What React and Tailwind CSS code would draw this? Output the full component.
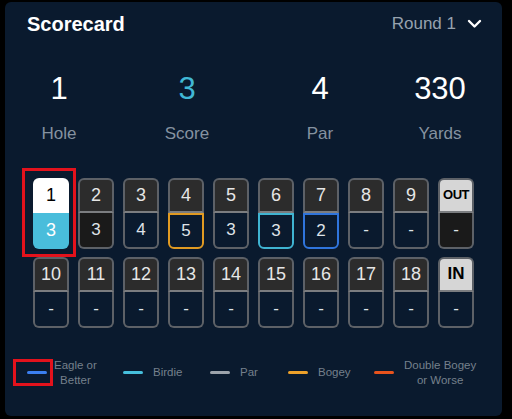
const HOLES_OUT = [
  { hole: "1", score: "3", kind: "selected" },
  { hole: "2", score: "3", kind: "par" },
  { hole: "3", score: "4", kind: "none" },
  { hole: "4", score: "5", kind: "bogey" },
  { hole: "5", score: "3", kind: "none" },
  { hole: "6", score: "3", kind: "birdie" },
  { hole: "7", score: "2", kind: "eagle" },
  { hole: "8", score: "-", kind: "none" },
  { hole: "9", score: "-", kind: "none" },
];

const HOLES_IN = ["10", "11", "12", "13", "14", "15", "16", "17", "18"].map((h) => ({
  hole: h,
  score: "-",
  kind: "none",
}));

const STATS = [
  { value: "1", label: "Hole", color: "text-white" },
  { value: "3", label: "Score", color: "text-[#41b8d5]" },
  { value: "4", label: "Par", color: "text-white" },
  { value: "330", label: "Yards", color: "text-white" },
];

const LEGEND = [
  { label: ["Eagle or", "Better"], color: "bg-[#3b7ff0]", boxed: true },
  { label: ["Birdie"], color: "bg-[#46bfdc]" },
  { label: ["Par"], color: "bg-[#9ca3ab]" },
  { label: ["Bogey"], color: "bg-[#eda12a]" },
  { label: ["Double Bogey", "or Worse"], color: "bg-[#e8531c]" },
];

function bottomClass(kind) {
  switch (kind) {
    case "bogey":
      return "border-2 border-[#e09a22] bg-[#0a1a2e]";
    case "birdie":
      return "border-2 border-[#3fb4d2] bg-[#0a1a2e]";
    case "eagle":
      return "border-2 border-[#2f74db] bg-[#0a1a2e]";
    case "par":
      return "border-2 border-t-0 border-[#5d6167] bg-[#1a1a1a]";
    default:
      return "border-2 border-t-0 border-[#5d6167] bg-[#0a1a2e]";
  }
}

function Tile({ hole, score, kind }) {
  if (kind === "selected") {
    return (
      <div className="relative w-[36px] h-[71px]">
        <div className="absolute -left-[11px] -top-[10px] w-[54px] h-[89px] border-[3px] border-[#e3121c]" />
        <div className="flex flex-col w-[36px] h-[71px] rounded-md overflow-hidden">
          <div className="h-[35px] bg-white flex items-center justify-center text-[18px] text-black">{hole}</div>
          <div className="h-[36px] bg-[#49bddb] flex items-center justify-center text-[18px] text-white">{score}</div>
        </div>
      </div>
    );
  }
  return (
    <div className="flex flex-col w-[36px] h-[71px]">
      <div className="h-[35px] rounded-t-md border-2 border-[#5d6167] border-b-[#7b7d80] bg-[#2c2c2c] flex items-center justify-center text-[18px] text-[#e6e6e6]">
        {hole}
      </div>
      <div className={`h-[36px] rounded-b-md flex items-center justify-center text-[17px] text-[#dfe3e8] ${bottomClass(kind)}`}>
        {score}
      </div>
    </div>
  );
}

function TotalTile({ label, dark, small }) {
  return (
    <div className="flex flex-col w-[36px] h-[71px]">
      <div
        className={`h-[35px] rounded-t-md border-2 border-[#5d6167] border-b-[#7b7d80] bg-[#d6d6d6] flex items-center justify-center font-bold text-black ${
          small ? "text-[13px] tracking-[-0.5px]" : "text-[17px]"
        }`}
      >
        {label}
      </div>
      <div
        className={`h-[36px] rounded-b-md border-2 border-t-0 border-[#5d6167] flex items-center justify-center text-[17px] text-[#dfe3e8] ${
          dark ? "bg-[#1a1a1a]" : "bg-[#0a1a2e]"
        }`}
      >
        -
      </div>
    </div>
  );
}

export default function App() {
  return (
    <div className="w-[512px] h-[419px] bg-black pl-[5px] pt-[2px] pr-[10px] pb-[3px] font-['Liberation_Sans',Arial,sans-serif]">
      <div className="w-full h-full bg-[#0a1a2e] rounded-md flex flex-col">
        <div className="flex items-center justify-between pl-[22px] pr-[20px] pt-[8px] h-[36px]">
          <span className="text-white font-bold text-[20px]">Scorecard</span>
          <div className="flex items-center gap-[11px]">
            <span className="text-[#97a2ae] text-[17px]">Round 1</span>
            <svg width="15" height="10" viewBox="0 0 15 10" fill="none">
              <path d="M2 2l5.5 5.5L13 2" stroke="white" strokeWidth="2.4" strokeLinecap="round" strokeLinejoin="round" />
            </svg>
          </div>
        </div>

        <div className="grid grid-cols-[108px_148px_118px_122px] mt-[35px]">
          {STATS.map((s) => (
            <div key={s.label} className="flex flex-col items-center">
              <span className={`text-[31px] leading-[32px] ${s.color}`}>{s.value}</span>
              <span className="text-[17px] text-[#8592a0] mt-[16px]">{s.label}</span>
            </div>
          ))}
        </div>

        <div className="flex flex-col gap-[8px] pl-[28px] mt-[31px]">
          <div className="flex gap-[9px]">
            {HOLES_OUT.map((h) => (
              <Tile key={h.hole} {...h} />
            ))}
            <TotalTile label="OUT" dark small />
          </div>
          <div className="flex gap-[9px]">
            {HOLES_IN.map((h) => (
              <Tile key={h.hole} {...h} />
            ))}
            <TotalTile label="IN" />
          </div>
        </div>

        <div className="flex items-center mt-[30px] pl-[8px] text-[11.5px] leading-[15px] text-[#75808c]">
          {LEGEND.map((l, i) => (
            <div
              key={i}
              className={`flex items-center ${
                i === 0 ? "w-[110px]" : i === 1 ? "w-[87px]" : i === 2 ? "w-[78px]" : i === 3 ? "w-[86px]" : ""
              }`}
            >
              <div
                className={`flex items-center ${
                  l.boxed ? "w-[40px] h-[27px] border-[3px] border-[#e3121c] pl-[11px]" : "w-[20px]"
                }`}
              >
                <div className={`w-[20px] h-[3px] rounded-full ${l.color}`} />
              </div>
              <div className={`flex flex-col items-center ${l.boxed ? "ml-[1px]" : "ml-[10px]"}`}>
                {l.label.map((t) => (
                  <span key={t}>{t}</span>
                ))}
              </div>
            </div>
          ))}
        </div>
      </div>
    </div>
  );
}
